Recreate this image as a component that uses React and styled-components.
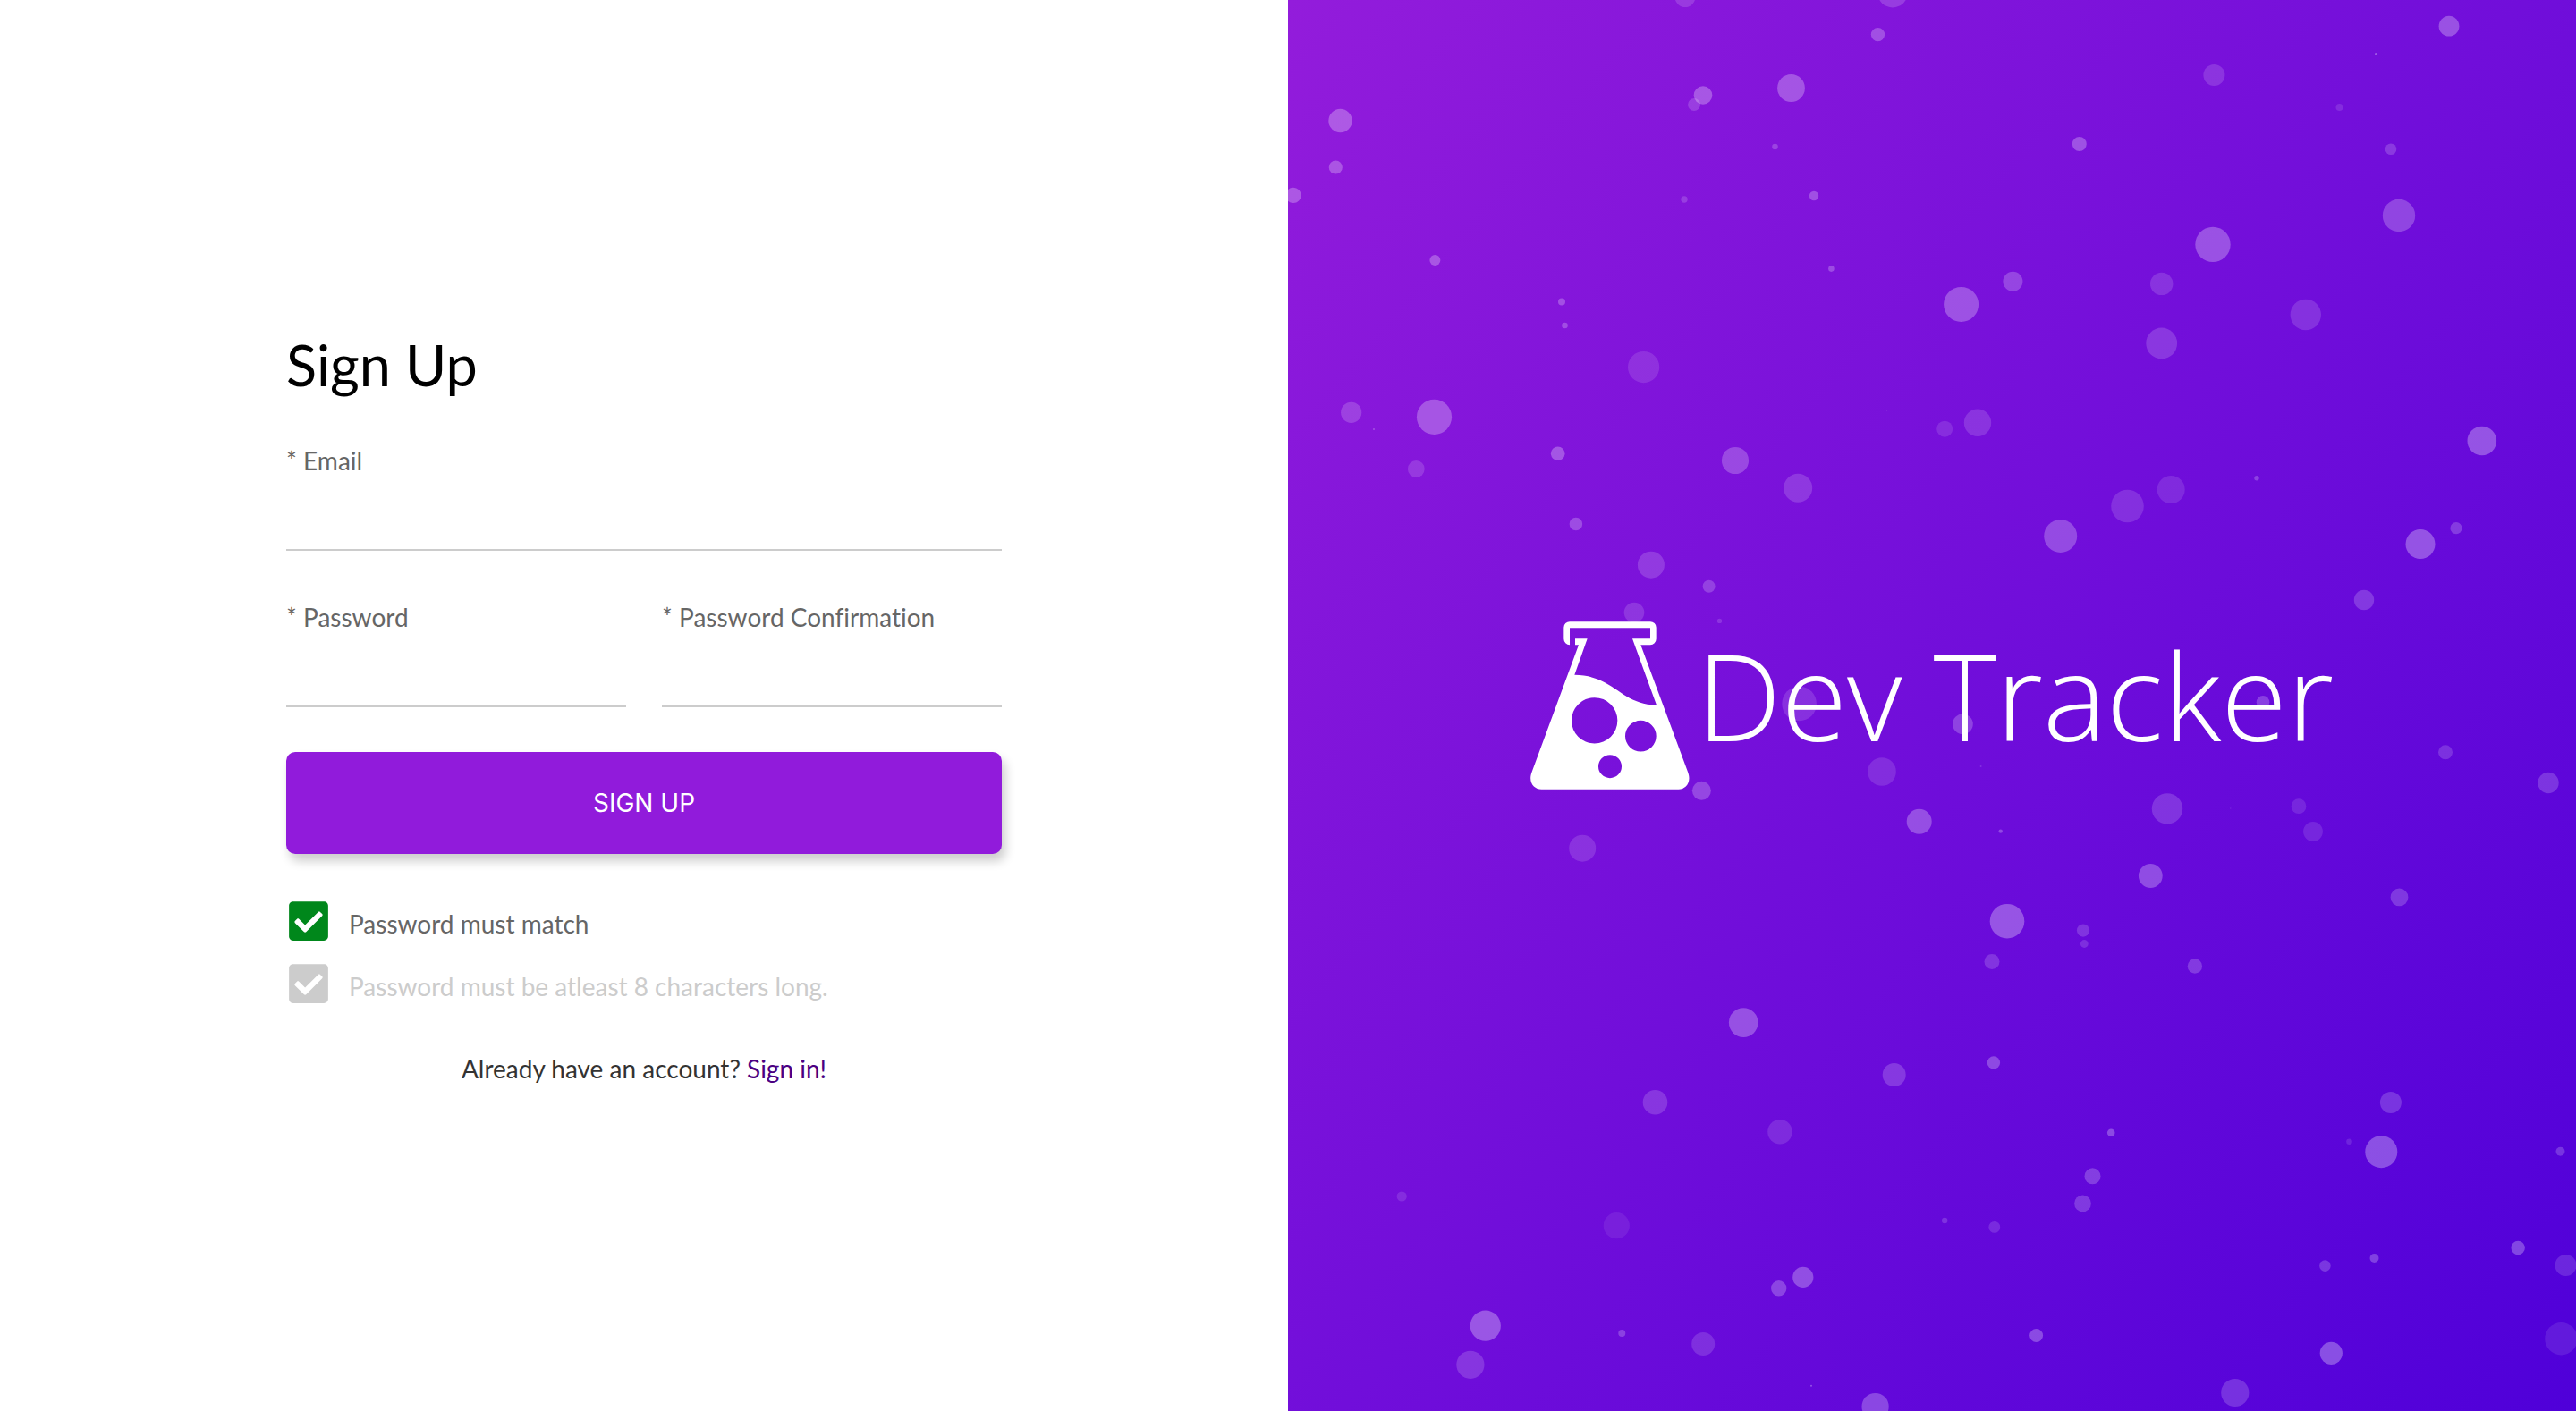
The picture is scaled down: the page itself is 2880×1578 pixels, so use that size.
import React from "react";
import styled, { createGlobalStyle } from "styled-components";
import { FaCheckSquare } from "react-icons/fa";

const GlobalStyle = createGlobalStyle`
  *, *::before, *::after { box-sizing: border-box; }
  body {
    margin: 0;
    background: #fff;
    font-family: Lato, "Liberation Sans", sans-serif;
    font-variant-ligatures: none;
  }
`;

const Page = styled.div`
  display: grid;
  grid-template-columns: 1fr 1fr;
  min-height: 100vh;
`;

const FormPanel = styled.main`
  display: flex;
  flex-direction: column;
  align-items: center;
  justify-content: center;
  padding: 6px 40px 0;
`;

const Form = styled.form`
  display: flex;
  flex-direction: column;
  width: 100%;
  max-width: 800px;
`;

const Title = styled.h1`
  margin: 0 0 52px;
  font-size: 63px;
  line-height: 74px;
  font-weight: 400;
  color: #000;
`;

const Fields = styled.div`
  display: grid;
  grid-template-columns: 1fr 1fr;
  column-gap: 40px;
  row-gap: 56px;
`;

const Field = styled.div`
  display: flex;
  flex-direction: column;
  grid-column: ${(p) => (p.$wide ? "1 / -1" : "auto")};
`;

const Label = styled.label`
  font-size: 28px;
  line-height: 36px;
  color: #666;
`;

const TextInput = styled.input`
  width: 100%;
  height: 83px;
  padding: 24px 0 12px;
  border: 0;
  border-bottom: 2px solid #ccc;
  border-radius: 0;
  background: transparent;
  font: inherit;
  font-size: 28px;
  color: #333;
  outline: none;
`;

const SubmitButton = styled.button`
  height: 114px;
  margin: 50px 0;
  border: 0;
  border-radius: 10px;
  background: #911bdb;
  box-shadow: 4px 8px 12px rgba(0, 0, 0, 0.2);
  color: #fff;
  font-family: Inter, "Liberation Sans", sans-serif;
  font-size: 28px;
  text-transform: uppercase;
  cursor: pointer;
`;

const Rules = styled.div`
  display: flex;
  flex-direction: column;
  gap: 20px;
`;

const Rule = styled.label`
  position: relative;
  display: flex;
  align-items: flex-end;
  gap: 20px;
  font-size: 28px;
  line-height: 44px;
  color: ${(p) => (p.$met ? "#666" : "#ccc")};

  svg {
    width: 50px;
    height: 50px;
    color: ${(p) => (p.$met ? "#00871b" : "#ccc")};
  }
`;

const RuleInput = styled.input`
  position: absolute;
  width: 50px;
  height: 50px;
  margin: 0;
  opacity: 0;
`;

const Footer = styled.p`
  margin: 52px 0 0;
  font-size: 28px;
  line-height: 36px;
  text-align: center;
  color: #333;
`;

const SignInLink = styled.a`
  color: #4b0082;
  text-decoration: none;
`;

const BrandPanel = styled.aside`
  position: relative;
  display: flex;
  align-items: center;
  justify-content: center;
  overflow: hidden;
  background: linear-gradient(130deg, #931cdb 0%, #4f00d9 100%);
`;

const BubbleField = styled.svg`
  position: absolute;
  inset: 0;
  width: 100%;
  height: 100%;
`;

const Brand = styled.div`
  position: relative;
  display: flex;
  align-items: center;
  gap: 8px;
  color: #fff;
`;

const FlaskLogo = styled.svg`
  width: 178px;
  height: 188px;
`;

const BrandName = styled.span`
  padding-bottom: 24px;
  font-family: "Open Sans", "Noto Sans", sans-serif;
  font-size: 134px;
  line-height: 156px;
  font-weight: 360;
  white-space: nowrap;
`;

/* x, y, radius, opacity */
const bubbles = [
  [444, -3.5, 11.5, 0.15], [676, -8.6, 17, 0.17], [659.5, 38.6, 7.7, 0.25], [562.5, 98.5, 15.4, 0.27],
  [464, 106.5, 10.3, 0.28], [454, 117, 6.9, 0.17], [58.5, 135, 13.2, 0.28], [53.3, 187, 7.6, 0.26],
  [6, 218.4, 8.7, 0.27], [544.5, 164, 3.3, 0.2], [443, 223, 3.7, 0.17], [588, 219, 5.2, 0.25],
  [164.4, 291, 6, 0.27], [607.4, 300.6, 3.3, 0.24], [306, 337.5, 4, 0.25], [309.5, 364, 3.3, 0.24],
  [397.6, 410.6, 17.6, 0.12], [70.7, 461.3, 11.6, 0.18], [163.5, 466.3, 19.6, 0.27], [96, 480, 1, 0.25],
  [301.7, 507.2, 7.8, 0.28], [669.5, 459, 0.7, 0.12], [500, 515, 15.1, 0.23], [143.3, 524.5, 9.4, 0.15],
  [1298, 29.2, 11.4, 0.28], [1216.3, 60.4, 1.3, 0.3], [1035.4, 84, 12, 0.15], [1175.5, 120, 4, 0.12],
  [884.8, 161, 8, 0.27], [1233, 166.8, 6.3, 0.18], [1242, 241, 18.2, 0.23], [1034, 273.4, 19.7, 0.28],
  [810.4, 314.7, 11, 0.22], [752.6, 340.5, 19.5, 0.27], [976.7, 317.4, 12.7, 0.15], [1137.8, 352, 17.2, 0.15],
  [976.7, 384, 17.4, 0.17], [734.2, 479.7, 9, 0.12], [771, 472.7, 15.2, 0.15], [1334.8, 493, 16.3, 0.3],
  [570.2, 545.8, 16, 0.16], [321.9, 586, 7.3, 0.24], [405.9, 631.7, 15, 0.17], [470.6, 655.8, 7, 0.2],
  [387, 685, 11.3, 0.15], [482.5, 694.4, 2.7, 0.15], [571.6, 787, 19.3, 0.14], [664, 863, 15.8, 0.13],
  [462.4, 884.3, 10.5, 0.23], [705.7, 918.8, 14, 0.27], [329.2, 948.7, 15, 0.14],
  [987.2, 547.5, 15.5, 0.12], [938.5, 566, 18.3, 0.14], [1083, 534.7, 2.7, 0.22], [863.7, 599.5, 18.5, 0.25],
  [1266, 608.5, 16.5, 0.3], [1306, 590.7, 6.6, 0.2], [1203, 671, 11.2, 0.19], [754.4, 809.8, 11.4, 0.22],
  [1090, 785.3, 7.3, 0.22], [1294, 841.3, 8, 0.17], [1409, 875.5, 11.7, 0.19], [774.6, 857, 1, 0.15],
  [796.7, 929.6, 2.2, 0.25], [983, 904.4, 17.2, 0.17], [1130, 901.7, 8.4, 0.12], [1146, 930, 10.9, 0.12],
  [964.3, 979.5, 13.4, 0.27], [1053.8, 904, 0.7, 0.12], [1242.5, 1003.4, 9.9, 0.2], [804, 1030.2, 19.3, 0.3],
  [889, 1040.6, 7.1, 0.17],
  [509.2, 1143.6, 16.3, 0.28], [677.7, 1202, 13, 0.19], [410.5, 1232.8, 13.8, 0.17], [550, 1265.7, 13.8, 0.13],
  [127.2, 1338, 5.6, 0.12], [367.3, 1370.7, 14.6, 0.08], [575.8, 1428.4, 11.6, 0.28], [548.7, 1440.8, 8.7, 0.24],
  [220.8, 1482.7, 17.1, 0.3], [203.9, 1526.3, 15.6, 0.17], [373.3, 1491, 4, 0.22], [464.2, 1503, 13, 0.15],
  [585, 1549.8, 1, 0.3], [656.6, 1573, 15.1, 0.26],
  [890.3, 1055.5, 4.4, 0.15], [787, 1075.5, 8.5, 0.17], [1013.9, 1080.5, 8.2, 0.2], [788.9, 1188.5, 7.2, 0.26],
  [1232.9, 1233, 12, 0.19], [920.2, 1266.7, 4.3, 0.27], [1186.5, 1276.8, 3.3, 0.12], [1222.3, 1288.2, 18, 0.3],
  [1422.5, 1287.8, 5, 0.2], [899.5, 1315.3, 9, 0.22], [888.5, 1345.9, 9.4, 0.2], [734.2, 1365, 3.2, 0.17],
  [789.8, 1372.4, 6.4, 0.14], [1375.2, 1395.5, 7.7, 0.27], [1428.5, 1415, 12, 0.15], [1159.4, 1415.6, 6.3, 0.2],
  [1214.5, 1407, 5, 0.24], [836.6, 1493.5, 7.5, 0.27], [1423.4, 1497.2, 18.2, 0.1], [1166.3, 1513.3, 12.6, 0.3],
  [1058.8, 1557.5, 15.6, 0.18],
];

function Flask() {
  return (
    <FlaskLogo viewBox="90 72 534 563" aria-hidden="true">
      <path
        fill="currentColor"
        fillRule="evenodd"
        d="M222 150A20 20 0 0 1 202 130V92A20 20 0 0 1 222 72H492A20 20 0 0 1 512 92V130A20 20 0 0 1 492 150H460L618 576C632 612 610 635 587 635H127C103 635 81 612 95 576L252 150H240V129H281L238 251C370 251 390 350 513 352L432 129H492V93H222Z
        M228 404a77 77 0 1 0 154 0a77 77 0 1 0 -154 0Z
        M408 456a52 52 0 1 0 104 0a52 52 0 1 0 -104 0Z
        M318 558a39 39 0 1 0 78 0a39 39 0 1 0 -78 0Z"
      />
    </FlaskLogo>
  );
}

export default function App() {
  return (
    <>
      <GlobalStyle />
      <Page>
        <FormPanel>
          <Form onSubmit={(e) => e.preventDefault()}>
            <Title>Sign Up</Title>
            <Fields>
              <Field $wide>
                <Label htmlFor="email">* Email</Label>
                <TextInput id="email" type="email" />
              </Field>
              <Field>
                <Label htmlFor="password">* Password</Label>
                <TextInput id="password" type="password" />
              </Field>
              <Field>
                <Label htmlFor="confirmation">* Password Confirmation</Label>
                <TextInput id="confirmation" type="password" />
              </Field>
            </Fields>
            <SubmitButton type="submit">Sign Up</SubmitButton>
            <Rules>
              <Rule $met>
                <RuleInput type="checkbox" checked readOnly />
                <FaCheckSquare aria-hidden="true" />
                Password must match
              </Rule>
              <Rule>
                <RuleInput type="checkbox" checked={false} readOnly />
                <FaCheckSquare aria-hidden="true" />
                Password must be atleast 8 characters long.
              </Rule>
            </Rules>
            <Footer>
              Already have an account? <SignInLink href="#signin">Sign in!</SignInLink>
            </Footer>
          </Form>
        </FormPanel>
        <BrandPanel>
          <BubbleField viewBox="0 0 1440 1578" preserveAspectRatio="xMidYMid slice" aria-hidden="true">
            {bubbles.map(([x, y, r, o]) => (
              <circle key={`${x}-${y}`} cx={x} cy={y} r={r} fill="#fff" fillOpacity={o} />
            ))}
          </BubbleField>
          <Brand>
            <Flask />
            <BrandName>Dev Tracker</BrandName>
          </Brand>
        </BrandPanel>
      </Page>
    </>
  );
}
